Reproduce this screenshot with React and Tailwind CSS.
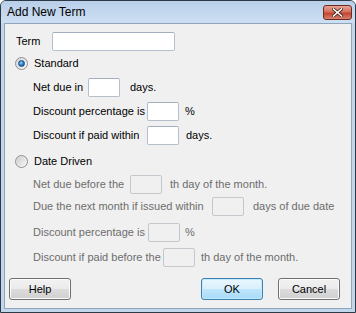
const font = "font-['Liberation_Sans','Arial',sans-serif]";

function Field({ disabled }) {
  return (
    <div
      className={
        disabled
          ? "h-[19px] w-[32px] shrink-0 rounded-[2px] border border-[#c4c8cc] bg-[#f0f0f0]"
          : "h-[19px] w-[32px] shrink-0 rounded-[2px] border border-[#b5c0cd] border-t-[#a3afbe] bg-white"
      }
    />
  );
}

function Row({ label, labelW, after, gap, disabled, mt }) {
  return (
    <div className={`flex h-[19px] items-center pl-[28px] ${mt} ${disabled ? "text-[#6d6d6d]" : "text-black"}`}>
      <span className="shrink-0 whitespace-nowrap" style={{ width: labelW }}>{label}</span>
      <Field disabled={disabled} />
      <span className="whitespace-nowrap" style={{ marginLeft: gap }}>{after}</span>
    </div>
  );
}

function Radio({ checked, label, mt }) {
  return (
    <div className={`flex h-[13px] items-center pl-[10px] ${mt}`}>
      <div className="flex h-[13px] w-[13px] items-center justify-center rounded-full border border-[#8e8f8f] bg-gradient-to-br from-[#d9d9d9] to-[#f7f7f7]">
        {checked ? (
          <div className="h-[7px] w-[7px] rounded-full border border-[#1b4a7a] bg-[radial-gradient(circle_at_40%_35%,#7fd3ff,#1e74c4_60%,#0d3f7a)]" />
        ) : (
          <div className="h-[9px] w-[9px] rounded-full bg-gradient-to-br from-[#cfcfcf] to-[#f4f4f4]" />
        )}
      </div>
      <span className="ml-[6px] text-black">{label}</span>
    </div>
  );
}

function Button({ children, primary, className }) {
  return (
    <div
      className={`flex h-[22px] w-[62px] items-center justify-center rounded-[3px] border ${
        primary
          ? "border-[#3c7fb1] bg-[linear-gradient(#eaf6fd_0%,#d9f0fc_50%,#bee6fd_50%,#a7d9f5_100%)] shadow-[inset_0_0_0_1px_#c5e8fb]"
          : "border-[#707070] bg-[linear-gradient(#f2f2f2_0%,#ebebeb_50%,#dddddd_50%,#cfcfcf_100%)] shadow-[inset_0_0_0_1px_#fcfcfc]"
      } ${className || ""}`}
    >
      {children}
    </div>
  );
}

export default function App() {
  return (
    <div className={`${font} h-[313px] w-[356px] overflow-hidden rounded-t-[6px] border border-[#2c3a48] bg-[#c3d7ec] text-[11px] leading-none`}>
      <div className="flex h-[22px] items-center bg-gradient-to-b from-[#b9cfe9] to-[#cddff2] pl-[6px] pr-[3px]">
        <span className="text-[12px] text-black">Add New Term</span>
        <div className="ml-auto flex h-[15px] w-[29px] items-center justify-center rounded-[3px] border border-[#6b2a22] bg-[linear-gradient(#e8a394_0%,#d56f5d_45%,#c2432e_55%,#d6826f_100%)]">
          <svg width="11" height="9" viewBox="0 0 11 9">
            <path d="M1.5 1 L9.5 8 M9.5 1 L1.5 8" stroke="#3b1a14" strokeWidth="3" strokeLinecap="square" />
            <path d="M1.5 1 L9.5 8 M9.5 1 L1.5 8" stroke="#ffffff" strokeWidth="1.6" strokeLinecap="square" />
          </svg>
        </div>
      </div>
      <div className="mx-[3px] h-[286px] border border-[#8fa4bd] bg-[#f0f0f0]">
        <div className="flex h-[19px] items-center pl-[11px] mt-[8px]">
          <span className="w-[36px]">Term</span>
          <div className="h-[19px] w-[123px] rounded-[2px] border border-[#b5c0cd] border-t-[#a3afbe] bg-white" />
        </div>
        <Radio checked label="Standard" mt="mt-[6px]" />
        <Row label="Net due in" labelW={55} after="days." gap={10} mt="mt-[8px]" />
        <Row label="Discount percentage is" labelW={114} after="%" gap={6} mt="mt-[5px]" />
        <Row label="Discount if paid within" labelW={114} after="days." gap={7} mt="mt-[5px]" />
        <Radio label="Date Driven" mt="mt-[10px]" />
        <Row disabled label="Net due before the" labelW={97} after="th day of the month." gap={8} mt="mt-[7px]" />
        <Row disabled label="Due the next month if issued within" labelW={179} after="days of due date" gap={9} mt="mt-[3px]" />
        <Row disabled label="Discount percentage is" labelW={115} after="%" gap={5} mt="mt-[7px]" />
        <Row disabled label="Discount if paid before the" labelW={130} after="th day of the month." gap={6} mt="mt-[6px]" />
        <div className="mt-[11px] flex items-center pl-[4px] pr-[11px]">
          <Button>Help</Button>
          <Button primary className="ml-auto">OK</Button>
          <Button className="ml-[15px]">Cancel</Button>
        </div>
      </div>
    </div>
  );
}
